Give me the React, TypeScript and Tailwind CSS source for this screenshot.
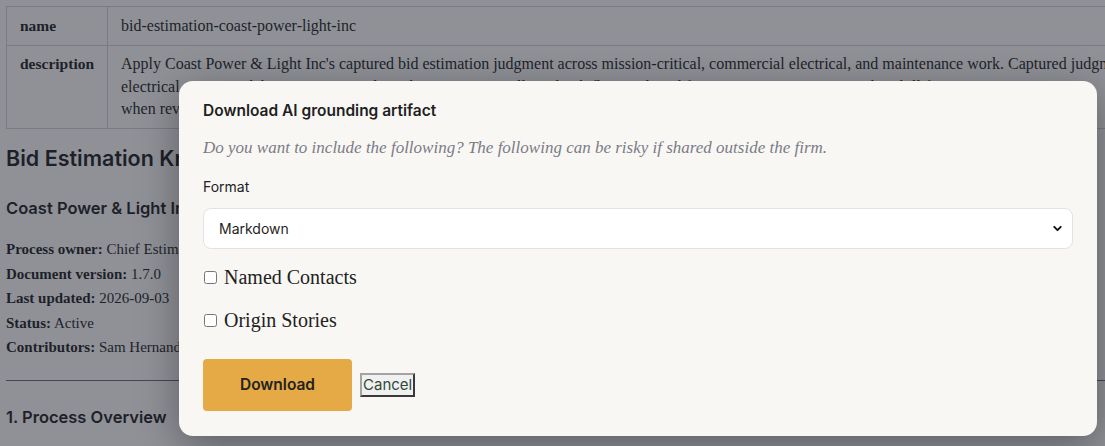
import { ChevronDown } from "lucide-react";

const serif = "font-['Liberation_Serif',serif]";
const sans = "font-['Inter',sans-serif]";

function Page() {
  return (
    <div className={`w-[1300px] px-[6px] pt-[6px] text-[#1c1c22] ${serif}`}>
      <table className="w-full table-fixed border-collapse border border-[#d2d3d6] text-[16px] leading-[22.5px]">
        <tbody>
          <tr>
            <th className="w-[101px] border border-[#d2d3d6] px-[13px] py-[7.5px] text-left align-top text-[15.5px] font-bold">name</th>
            <td className="whitespace-nowrap border border-[#d2d3d6] px-[13px] py-[7.5px]">bid-estimation-coast-power-light-inc</td>
          </tr>
          <tr>
            <th className="border border-[#d2d3d6] px-[13px] py-[7.5px] text-left align-top text-[15.5px] font-bold">description</th>
            <td className="whitespace-nowrap border border-[#d2d3d6] px-[13px] py-[7.5px]">
              Apply Coast Power &amp; Light Inc's captured bid estimation judgment across mission-critical, commercial electrical, and maintenance work. Captured judgment covers pricing for
              <br />
              electrical contracts, labor units, material escalation, margin calls and risk flags gathered from senior estimators. Use this skill for
              <br />
              when reviewing a new bid package before submission.
            </td>
          </tr>
        </tbody>
      </table>

      <h1 className={`mt-[15px] text-[21.5px] font-semibold leading-[28px] ${sans}`}>Bid Estimation Knowledge Base</h1>
      <h2 className={`mt-[24px] text-[16.5px] font-semibold leading-[24px] ${sans}`}>Coast Power &amp; Light Inc</h2>

      <div className="mt-[18px] space-y-[2px] text-[15px] leading-[22.5px]">
        <p><strong>Process owner:</strong> Chief Estimator</p>
        <p><strong>Document version:</strong> 1.7.0</p>
        <p><strong>Last updated:</strong> 2026-09-03</p>
        <p><strong>Status:</strong> Active</p>
        <p><strong>Contributors:</strong> Sam Hernandez, Priya Nair, Dale Okafor</p>
      </div>

      <hr className="mt-[21px] border-t border-[#6b6d73]" />

      <h2 className={`mt-[24px] text-[16.5px] font-semibold leading-[24px] ${sans}`}>1. Process Overview</h2>
      <p className="mt-[16px] pl-[90px] text-[15px] leading-[22px]">
        This process governs how bid estimates are prepared, reviewed and approved for electrical work at Coast Power &amp; Light Inc.
      </p>
    </div>
  );
}

function Modal() {
  return (
    <div className="absolute left-[179px] top-[81px] w-[918px] rounded-[14px] bg-[#f8f7f4] px-[24px] pb-[25px] pt-[20px] shadow-[0_10px_40px_rgba(0,0,0,0.35)]">
      <h3 className={`text-[15.5px] font-semibold leading-[20px] text-[#1f1f1f] ${sans}`}>Download AI grounding artifact</h3>
      <p className={`mt-[16px] text-[17px] italic leading-[22px] text-[#7b7b86] ${serif}`}>
        Do you want to include the following? The following can be risky if shared outside the firm.
      </p>
      <label className={`mt-[18px] block text-[14px] leading-[20px] text-[#222] ${sans}`}>Format</label>
      <div className="relative mt-[11px]">
        <select
          className={`h-[41px] w-full appearance-none rounded-[8px] border border-[#e2e2e4] bg-white px-[15px] text-[14px] text-[#1f1f1f] ${sans}`}
          defaultValue="md"
        >
          <option value="md">Markdown</option>
          <option value="json">JSON</option>
        </select>
        <ChevronDown
          className="pointer-events-none absolute right-[9px] top-[14px] text-[#111]"
          size={13}
          strokeWidth={3.5}
        />
      </div>
      <label className={`mt-[14px] flex h-[28px] items-center text-[20px] text-[#222] ${serif}`}>
        <input type="checkbox" className="ml-[1px] mr-[7px] h-[13px] w-[13px]" />
        Named Contacts
      </label>
      <label className={`mt-[15px] flex h-[28px] items-center text-[20px] text-[#222] ${serif}`}>
        <input type="checkbox" className="ml-[1px] mr-[7px] h-[13px] w-[13px]" />
        Origin Stories
      </label>
      <div className="mt-[25px] flex items-center gap-[8px]">
        <button className={`h-[52px] w-[149px] rounded-[4px] bg-[#e5a945] text-[15.5px] font-semibold text-[#222] ${sans}`}>
          Download
        </button>
        <button
          className={`h-[24px] border-2 border-b-[#3a3a3a] border-l-[#a3a3a3] border-r-[#3a3a3a] border-t-[#a3a3a3] bg-[#f0f0f0] px-[1px] text-[15px] leading-[18px] text-[#2f4a3c] ${sans}`}
        >
          Cancel
        </button>
      </div>
    </div>
  );
}

export default function App() {
  return (
    <div className="relative h-[446px] w-[1105px] overflow-hidden bg-white">
      <Page />
      <div className="absolute inset-0 bg-[#1f2430]/50" />
      <Modal />
    </div>
  );
}
